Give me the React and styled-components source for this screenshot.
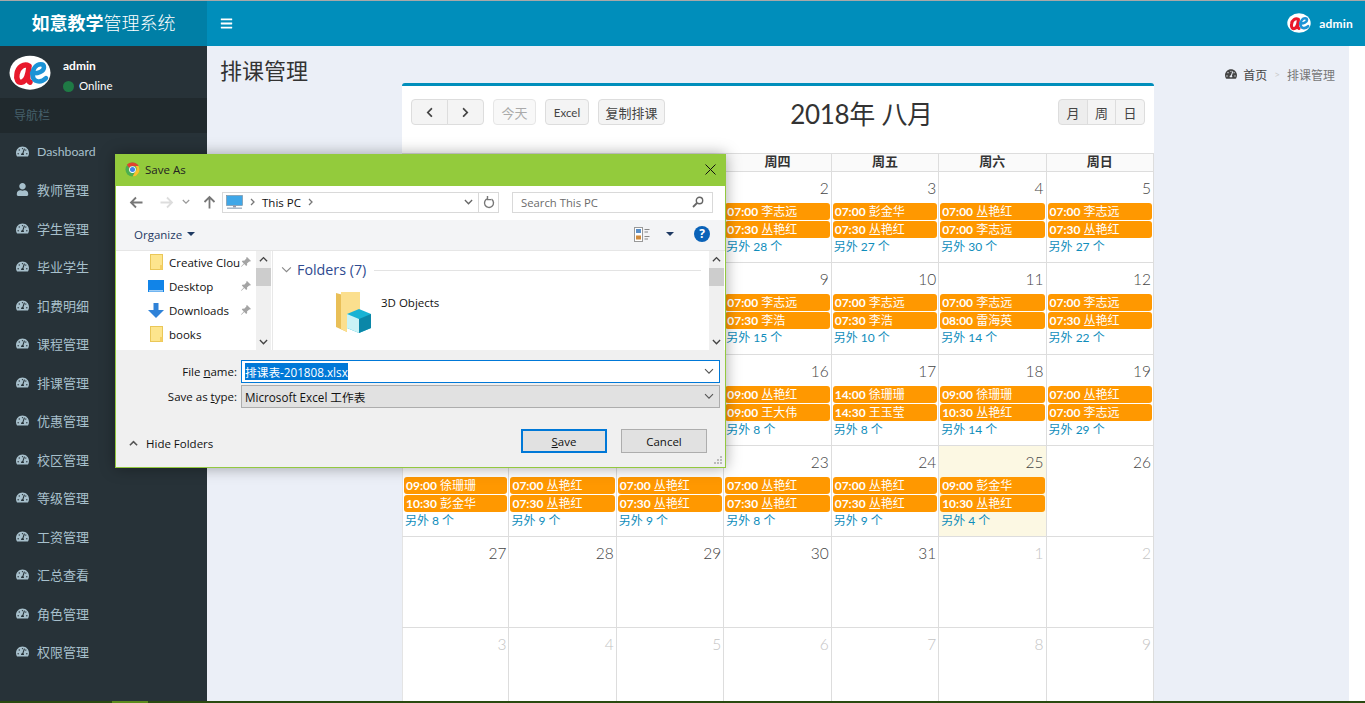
import React from 'react';
import styled, { createGlobalStyle } from 'styled-components';
import { FaBars, FaTachometerAlt, FaUser, FaChevronLeft, FaChevronRight } from 'react-icons/fa';

const CJK = '"Noto Sans CJK SC", sans-serif';
const UI = `Lato, ${CJK}`;
const WIN = `"Open Sans", ${CJK}`;

const Global = createGlobalStyle`
  html, body { margin: 0; padding: 0; background: #fff; overflow: hidden; }
  * { box-sizing: border-box; }
`;

const Page = styled.div`
  position: relative;
  width: 1365px;
  height: 703px;
  display: flex;
  flex-direction: column;
  overflow: hidden;
  font-family: ${UI};
  border-top: 1px solid #a8a8a8;
`;

const TopBar = styled.header`
  flex: 0 0 45px;
  display: flex;
  align-items: center;
  background: #008ebb;
  color: #fff;
`;

const Brand = styled.div`
  width: 207px;
  height: 100%;
  background: #007fa6;
  font-size: 18px;
  line-height: 44px;
  text-align: center;
  font-weight: 300;
  b { font-weight: 700; }
`;

const Burger = styled.div`
  margin-left: 13px;
  display: flex;
  font-size: 13px;
`;

const TopUser = styled.div`
  margin-left: auto;
  margin-right: 12px;
  display: flex;
  align-items: center;
  gap: 8px;
  font-size: 12px;
  font-weight: 700;
  letter-spacing: 0.2px;
`;

const Body = styled.div`
  flex: 1;
  display: flex;
  min-height: 0;
`;

const Sidebar = styled.aside`
  width: 207px;
  background: #273238;
  color: #a7c0cc;
`;

const UserPanel = styled.div`
  height: 52px;
  padding: 9px 0 0 9px;
  display: flex;
  gap: 12px;
  color: #fff;
`;

const UserName = styled.div`
  font-size: 12px;
  font-weight: 700;
  line-height: 16px;
  margin-top: 3px;
`;

const UserStatus = styled.div`
  display: flex;
  align-items: center;
  gap: 5px;
  font-size: 11.5px;
  line-height: 16px;
  margin-top: 4px;
  font-weight: 400;
`;

const StatusDot = styled.i`
  width: 11px;
  height: 11px;
  border-radius: 50%;
  background: #1f7a45;
`;

const NavHeader = styled.div`
  height: 35px;
  padding-left: 14px;
  background: #20292d;
  color: #46606b;
  font-size: 12px;
  line-height: 35px;
`;

const NavItem = styled.div`
  height: 38.5px;
  padding: 0 0 ${p => (p.$latin ? '1px' : '2px')} 16px;
  display: flex;
  align-items: center;
  gap: 8px;
  font-size: ${p => (p.$latin ? '12.3px' : '13px')};
`;

const NavIcon = styled.span`
  width: 13px;
  display: flex;
  justify-content: center;
  font-size: 13px;
`;

const Content = styled.main`
  flex: 1;
  background: #ebeff7;
  min-width: 0;
  overflow: hidden;
`;

const Gutter = styled.div`
  width: 16px;
  background: #fff;
`;

const ContentHeader = styled.div`
  height: 37px;
  padding: 0 14px 0 13px;
  display: flex;
  justify-content: space-between;
`;

const PageTitle = styled.h1`
  margin: 10px 0 0;
  height: 30px;
  font-size: 22px;
  line-height: 30px;
  font-weight: 400;
  color: #333;
`;

const Crumbs = styled.div`
  margin-top: 19px;
  display: flex;
  align-items: center;
  height: 18px;
  gap: 6px;
  font-size: 12px;
  color: #444;
`;

const CrumbSep = styled.span`
  color: #ccc;
  font-size: 10px;
  margin: 0 1px;
`;

const CrumbActive = styled.span`
  color: #777;
`;

const Card = styled.section`
  width: 752px;
  margin: 0 auto;
  background: #fff;
  border-top: 3px solid #008ebb;
  border-radius: 3px 3px 0 0;
`;

const Toolbar = styled.div`
  height: 67px;
  padding: 13px 9px 0;
  display: flex;
  justify-content: space-between;
  align-items: flex-start;
`;

const ToolLeft = styled.div`
  display: flex;
  gap: 9px;
`;

const Group = styled.div`
  display: flex;
`;

const CalButton = styled.button`
  height: 26px;
  min-width: ${p => p.$w || 0}px;
  padding: 0 6px;
  display: flex;
  align-items: center;
  justify-content: center;
  font-family: ${UI};
  font-size: ${p => (p.$latin ? '11.5px' : '13px')};
  color: ${p => (p.$disabled ? '#aaa' : '#444')};
  background: ${p => (p.$active ? '#ededed' : p.$disabled ? '#f8f8f8' : '#f4f4f4')};
  border: 1px solid ${p => (p.$disabled ? '#e6e6e6' : '#ddd')};
  border-radius: 4px;
  ${Group} &:not(:last-child) { border-top-right-radius: 0; border-bottom-right-radius: 0; }
  ${Group} &:not(:first-child) { margin-left: -1px; border-top-left-radius: 0; border-bottom-left-radius: 0; }
`;

const CalTitle = styled.h2`
  margin: -1px 0 0;
  font-size: 26px;
  line-height: 32px;
  font-weight: 400;
  letter-spacing: -0.3px;
  color: #333;
  white-space: nowrap;
`;

const WeekRow = styled.div`
  display: grid;
  grid-template-columns: repeat(7, 1fr);
  height: 19px;
  background: #fafafa;
  border-top: 1px solid #ddd;
  border-bottom: 1px solid #ddd;
`;

const WeekCell = styled.div`
  font-size: 13px;
  font-weight: 700;
  line-height: 15px;
  text-align: center;
  color: #333;
  border-right: 1px solid #ddd;
`;

const DayRow = styled.div`
  display: grid;
  grid-template-columns: repeat(7, 1fr);
  height: 91.3px;
  border-bottom: 1px solid #ddd;
`;

const DayCell = styled.div`
  padding: 0 1px;
  border-right: 1px solid #ddd;
  background: ${p => (p.$today ? '#fcf8e3' : '#fff')};
  &:first-child { border-left: 1px solid #e4e4e4; }
`;

const DayNumber = styled.div`
  height: 31px;
  padding: 5px 1px 0 0;
  text-align: right;
  font-size: 15.5px;
  line-height: 22px;
  font-weight: 300;
  color: ${p => (p.$other ? '#c4c4c4' : '#444')};
`;

const EventChip = styled.div`
  height: 17px;
  margin-bottom: 1px;
  padding-left: 2px;
  background: #ff9800;
  border-radius: 3px;
  color: #fff;
  font-size: 12px;
  line-height: 17px;
  white-space: nowrap;
  overflow: hidden;
  b { font-weight: 700; }
`;

const MoreLink = styled.div`
  padding-left: 1px;
  font-size: 12px;
  line-height: 15px;
  color: #0f8dbb;
`;

const BottomStrip = styled.div`
  flex: 0 0 2px;
  display: flex;
  background: #2a4a10;
`;

const StripSegment = styled.div`
  width: 36px;
  margin-left: 112px;
  background: #5c8a1c;
`;

/* save dialog, a window on top of the page */
const Dialog = styled.div`
  position: absolute;
  left: 115px;
  top: 153px;
  width: 611px;
  height: 314px;
  display: flex;
  flex-direction: column;
  background: #f0f0f0;
  border: 1px solid #93c83f;
  border-top: 0;
  box-shadow: 0 0 14px rgba(0, 0, 0, 0.35);
  font-family: ${WIN};
  font-size: 11.5px;
  color: #111;
`;

const TitleBar = styled.div`
  flex: 0 0 32px;
  display: flex;
  align-items: center;
  gap: 5px;
  padding: 0 9px 2px 9px;
  background: #93cb3c;
  font-size: 11.5px;
  color: #222;
`;

const CloseX = styled.span`
  margin-left: auto;
  display: flex;
`;

const AddressRow = styled.div`
  flex: 0 0 34px;
  display: flex;
  align-items: center;
  background: #fff;
  padding: 0 0 2px 13px;
`;

const NavArrow = styled.span`
  display: flex;
  width: ${p => p.$w}px;
`;

const AddressBox = styled.div`
  width: 277px;
  height: 21px;
  display: flex;
  align-items: center;
  margin-left: 5px;
  padding-left: 3px;
  border: 1px solid #d9d9d9;
  gap: 7px;
  font-size: 11.5px;
`;

const AddressEnd = styled.span`
  margin-left: auto;
  display: flex;
  height: 100%;
  align-items: center;
`;

const RefreshBox = styled.span`
  width: 20px;
  height: 100%;
  margin-left: 5px;
  display: flex;
  align-items: center;
  justify-content: center;
  border-left: 1px solid #d9d9d9;
`;

const SearchBox = styled.div`
  width: 201px;
  height: 21px;
  margin-left: 13px;
  padding: 0 8px;
  display: flex;
  align-items: center;
  justify-content: space-between;
  border: 1px solid #d9d9d9;
  color: #6b6b6b;
  font-size: 11.3px;
`;

const OrganizeRow = styled.div`
  flex: 0 0 31px;
  display: flex;
  align-items: center;
  padding: 0 15px 2px 18px;
  background: #f3f4f6;
  border-bottom: 1px solid #e6e6e6;
  color: #1f3a63;
`;

const Caret = styled.i`
  width: 0;
  height: 0;
  margin-left: 5px;
  border: 4px solid transparent;
  border-top: 4px solid #1f3a63;
  border-bottom: 0;
`;

const ViewButtons = styled.div`
  margin-left: auto;
  display: flex;
  align-items: center;
  gap: 10px;
`;

const HelpIcon = styled.span`
  width: 16px;
  height: 16px;
  margin-left: 20px;
  border-radius: 50%;
  background: #0a62b8;
  color: #fff;
  font-size: 12px;
  font-weight: 700;
  line-height: 16px;
  text-align: center;
`;

const Panes = styled.div`
  flex: 0 0 99px;
  display: flex;
  padding-right: 1px;
  background: #fff;
  overflow: hidden;
`;

const TreePane = styled.div`
  width: 140px;
  padding: 0 0 0 30px;
`;

const TreeRow = styled.div`
  height: 24px;
  padding-bottom: 2px;
  display: flex;
  align-items: center;
  gap: 5px;
  position: relative;
  white-space: nowrap;
`;

const TreeIcon = styled.span`
  width: 16px;
  display: flex;
  justify-content: center;
  margin-left: 2px;
`;

const TreeLabel = styled.span`
  width: 72px;
  overflow: hidden;
`;

const Pin = styled.span`
  position: absolute;
  right: 5px;
  top: 6px;
  display: flex;
`;

const Scrollbar = styled.div`
  width: 15px;
  display: flex;
  flex-direction: column;
  align-items: center;
  justify-content: space-between;
  background: #f0f0f0;
  position: relative;
  padding: 5px 0;
`;

const ScrollThumb = styled.div`
  position: absolute;
  left: 0;
  right: 0;
  top: 17px;
  height: 18px;
  background: #cdcdcd;
`;

const PaneGap = styled.div`
  width: 1px;
  margin-left: 1px;
  background: #e8e8e8;
`;

const FilesPane = styled.div`
  flex: 1;
  padding: 9px 8px 0 8px;
`;

const GroupHeader = styled.div`
  display: flex;
  align-items: center;
  gap: 5px;
  color: #2f4a8f;
  font-size: 14.3px;
  line-height: 20px;
`;

const HeaderLine = styled.i`
  flex: 1;
  height: 1px;
  margin-left: 3px;
  background: #e3e3e3;
`;

const FileTile = styled.div`
  display: flex;
  align-items: flex-start;
  gap: 9px;
  margin: 11px 0 0 53px;
  line-height: 24px;
`;

const FormArea = styled.div`
  flex: 1;
  display: flex;
  flex-direction: column;
  padding: 10px 5px 0 0;
  position: relative;
`;

const FormRow = styled.div`
  display: flex;
  align-items: center;
  margin-bottom: 2px;
`;

const FormLabel = styled.label`
  width: 125px;
  padding-right: 4px;
  text-align: right;
  u { text-decoration: underline; }
`;

const FormField = styled.div`
  flex: 1;
  height: 23px;
  padding: 0 5px 0 3px;
  display: flex;
  align-items: center;
  justify-content: space-between;
  background: ${p => (p.$select ? '#e1e1e1' : '#fff')};
  border: 1px solid ${p => (p.$select ? '#adadad' : '#0078d7')};
  font-size: 11.7px;
`;

const Selected = styled.span`
  background: #0078d7;
  color: #fff;
`;

const FormFooter = styled.div`
  display: flex;
  align-items: center;
  margin: 19px 13px 0 13px;
`;

const HideFolders = styled.div`
  display: flex;
  align-items: center;
  gap: 8px;
  padding-top: 4px;
  white-space: nowrap;
`;

const DialogButton = styled.button`
  width: 86px;
  height: 24px;
  margin-left: ${p => (p.$primary ? 'auto' : '14px')};
  padding: 0;
  font-family: ${WIN};
  font-size: 11.5px;
  color: #111;
  background: #e1e1e1;
  border: ${p => (p.$primary ? '2px solid #0078d7' : '1px solid #adadad')};
  u { text-decoration: underline; }
`;

const Grip = styled.span`
  position: absolute;
  right: 2px;
  bottom: 2px;
  display: flex;
`;

const Logo = ({ size = 42 }) => (
  <svg width={size} height={size * 0.84} viewBox="0 0 42 35" style={{ flexShrink: 0 }}>
    <ellipse cx="21" cy="17.5" rx="20.5" ry="17" fill="#fff" />
    <path d="M20 11c-5-3-11 1-12 8-1 5 1 9 5 8 4-1 6-7 7-15-1 6-2 14 1 15" fill="none" stroke="#e8192c" strokeWidth="5.5" strokeLinecap="round" />
    <path d="M23 18c6 1 12-2 12-6 0-4-6-4-9 0-4 5-3 13 2 14 4 1 7-1 9-3" fill="none" stroke="#1c93d6" strokeWidth="4.5" strokeLinecap="round" />
  </svg>
);

const ChromeIcon = () => (
  <svg width="15" height="15" viewBox="0 0 16 16">
    <circle cx="8" cy="8" r="7.5" fill="#4caf50" />
    <path d="M8 .5a7.5 7.5 0 0 1 6.5 3.75H8a3.75 3.75 0 0 0-3.4 2.2L2 2.8A7.5 7.5 0 0 1 8 .5z" fill="#e2432f" />
    <path d="M14.5 4.25A7.5 7.5 0 0 1 8 15.5l3.2-5.6a3.75 3.75 0 0 0-.1-5.65z" fill="#fbc02d" />
    <circle cx="8" cy="8" r="3.6" fill="#fff" />
    <circle cx="8" cy="8" r="2.7" fill="#3f83e8" />
  </svg>
);

const Arrow = ({ dir, color }) => (
  <svg width="15" height="13" viewBox="0 0 15 13" style={{ transform: dir === 'right' ? 'scaleX(-1)' : dir === 'up' ? 'rotate(90deg)' : 'none' }}>
    <path d="M13.5 6.5H2M7 1.5l-5 5 5 5" fill="none" stroke={color} strokeWidth="1.8" />
  </svg>
);

const Chevron = ({ up, color = '#555', size = 9, width = 1.5 }) => (
  <svg width={size} height={size * 0.7} viewBox="0 0 10 7" style={{ transform: up ? 'rotate(180deg)' : 'none' }}>
    <path d="M1 1.2l4 4 4-4" fill="none" stroke={color} strokeWidth={width} />
  </svg>
);

const SmallRight = () => (
  <svg width="5" height="8" viewBox="0 0 5 8"><path d="M1 1l3 3-3 3" fill="none" stroke="#777" strokeWidth="1.3" /></svg>
);

const Monitor = () => (
  <svg width="17" height="15" viewBox="0 0 17 15">
    <rect x="0.5" y="0.5" width="16" height="10" fill="#3fa7e8" stroke="#7a8a99" strokeWidth="0.6" />
    <rect x="7" y="10.5" width="3" height="2" fill="#99a" />
    <rect x="1" y="12.5" width="15" height="1.4" fill="#9fb2c4" />
  </svg>
);

const FolderSmall = () => (
  <svg width="13" height="16" viewBox="0 0 13 16">
    <rect x="0.5" y="0.5" width="12" height="15" fill="#fde58d" stroke="#eac758" />
    <rect x="10" y="11" width="2.5" height="4.5" fill="#f5cf63" />
  </svg>
);

const DesktopIcon = () => (
  <svg width="16" height="12" viewBox="0 0 16 12">
    <rect width="16" height="12" fill="#1184e8" />
    <rect x="1" y="10.4" width="14" height="1" fill="#fff" />
  </svg>
);

const DownloadIcon = () => (
  <svg width="16" height="15" viewBox="0 0 16 15">
    <path d="M5.5 0h5v7H16l-8 8-8-8h5.5z" fill="#2f82d8" />
  </svg>
);

const PinIcon = () => (
  <svg width="10" height="10" viewBox="0 0 10 10">
    <path d="M6 0l4 4-1 .6-.8-.2L6 6.600l.2 1.400-1 1-2-2L.6 9.800 0 9.400 2.800 6.600l-2-2 1-1 1.400.2L5.400 1.600 5.200.8z" fill="#a4a4a4" />
  </svg>
);

const ObjectsIcon = () => (
  <svg width="38" height="43" viewBox="0 0 38 43">
    <path d="M2 2l11 3v36L2 36z" fill="#e9bf57" />
    <path d="M7 1h19v24H13v16l-6-3z" fill="#fbdf8e" />
    <path d="M25 18l12 5v14l-12 5-12-5V23z" fill="#18b3d4" />
    <path d="M13 23l12 5v14l-12-5z" fill="#c9f3f6" />
    <path d="M25 28l12-5v14l-12 5z" fill="#0b87a8" />
  </svg>
);

const ViewIcon = () => (
  <svg width="17" height="15" viewBox="0 0 17 15">
    <rect x="0.5" y="0.500" width="8" height="14" fill="#fff" stroke="#999" />
    <rect x="2" y="2" width="5" height="4" fill="#5b8fc7" />
    <rect x="2" y="8.500" width="5" height="4" fill="#d08a3c" />
    <path d="M10.500 2.500h5M10.500 5h3.500M10.500 9.500h5M10.500 12h3.500" stroke="#888" />
  </svg>
);

const SearchGlass = () => (
  <svg width="12" height="12" viewBox="0 0 12 12">
    <circle cx="7.500" cy="4.500" r="3.200" fill="none" stroke="#666" strokeWidth="1.400" />
    <path d="M5 7L1 11" stroke="#666" strokeWidth="1.800" />
  </svg>
);

const RefreshIcon = () => (
  <svg width="12" height="13" viewBox="0 0 12 13">
    <path d="M8.500 3.200a4.500 4.500 0 1 1-3.700-.6M4.500 0v3.600h3.500" fill="none" stroke="#777" strokeWidth="1.400" />
  </svg>
);

const GripIcon = () => (
  <svg width="9" height="9" viewBox="0 0 9 9" fill="#bbb">
    <rect x="6" y="0" width="2" height="2" />
    <rect x="3" y="3" width="2" height="2" />
    <rect x="6" y="3" width="2" height="2" />
    <rect x="0" y="6" width="2" height="2" />
    <rect x="3" y="6" width="2" height="2" />
    <rect x="6" y="6" width="2" height="2" />
  </svg>
);

const navItems = ['Dashboard', '教师管理', '学生管理', '毕业学生', '扣费明细', '课程管理', '排课管理', '优惠管理', '校区管理', '等级管理', '工资管理', '汇总查看', '角色管理', '权限管理'];
const weekDays = ['周一', '周二', '周三', '周四', '周五', '周六', '周日'];

const ev = (a, b, more) => ({ a, b, more });
const cyh = '丛艳红';
// the first three days of the top rows sit behind the dialog, so they carry no events
const weeks = [
  [
    { n: 30, other: true }, { n: 31, other: true }, { n: 1 },
    { n: 2, e: ev('07:00 李志远', `07:30 ${cyh}`, 28) },
    { n: 3, e: ev('07:00 彭金华', `07:30 ${cyh}`, 27) },
    { n: 4, e: ev(`07:00 ${cyh}`, '07:00 李志远', 30) },
    { n: 5, e: ev('07:00 李志远', `07:30 ${cyh}`, 27) },
  ],
  [
    { n: 6 }, { n: 7 }, { n: 8 },
    { n: 9, e: ev('07:00 李志远', '07:30 李浩', 15) },
    { n: 10, e: ev('07:00 李志远', '07:30 李浩', 10) },
    { n: 11, e: ev('07:00 李志远', '08:00 雷海英', 14) },
    { n: 12, e: ev('07:00 李志远', `07:30 ${cyh}`, 22) },
  ],
  [
    { n: 13 }, { n: 14 }, { n: 15 },
    { n: 16, e: ev(`09:00 ${cyh}`, '09:00 王大伟', 8) },
    { n: 17, e: ev('14:00 徐珊珊', '14:30 王玉莹', 8) },
    { n: 18, e: ev('09:00 徐珊珊', `10:30 ${cyh}`, 14) },
    { n: 19, e: ev(`07:00 ${cyh}`, '07:00 李志远', 29) },
  ],
  [
    { n: 20, e: ev('09:00 徐珊珊', '10:30 彭金华', 8) },
    { n: 21, e: ev(`07:00 ${cyh}`, `07:30 ${cyh}`, 9) },
    { n: 22, e: ev(`07:00 ${cyh}`, `07:30 ${cyh}`, 9) },
    { n: 23, e: ev(`07:00 ${cyh}`, `07:30 ${cyh}`, 8) },
    { n: 24, e: ev(`07:00 ${cyh}`, `07:30 ${cyh}`, 9) },
    { n: 25, today: true, e: ev('09:00 彭金华', `10:30 ${cyh}`, 4) },
    { n: 26 },
  ],
  [
    { n: 27 }, { n: 28 }, { n: 29 }, { n: 30 }, { n: 31 }, { n: 1, other: true }, { n: 2, other: true },
  ],
  [3, 4, 5, 6, 7, 8, 9].map(n => ({ n, other: true })),
];

const Chip = ({ text }) => {
  const [time, ...rest] = text.split(' ');
  return <EventChip><b>{time}</b> {rest.join(' ')}</EventChip>;
};

const SaveDialog = () => (
  <Dialog>
    <TitleBar>
      <ChromeIcon />
      <span>Save As</span>
      <CloseX>
        <svg width="11" height="11" viewBox="0 0 11 11"><path d="M.5.5l10 10M10.500.5l-10 10" stroke="#111" /></svg>
      </CloseX>
    </TitleBar>
    <AddressRow>
      <NavArrow $w={30}><Arrow color="#777" /></NavArrow>
      <NavArrow $w={23}><Arrow dir="right" color="#ddd" /></NavArrow>
      <NavArrow $w={20}><Chevron color="#999" size={8} /></NavArrow>
      <NavArrow $w={15}><Arrow dir="up" color="#777" /></NavArrow>
      <AddressBox>
        <Monitor />
        <SmallRight />
        <span>This PC</span>
        <SmallRight />
        <AddressEnd>
          <Chevron color="#666" />
          <RefreshBox><RefreshIcon /></RefreshBox>
        </AddressEnd>
      </AddressBox>
      <SearchBox>
        <span>Search This PC</span>
        <SearchGlass />
      </SearchBox>
    </AddressRow>
    <OrganizeRow>
      <span>Organize</span>
      <Caret />
      <ViewButtons>
        <ViewIcon />
        <Caret />
      </ViewButtons>
      <HelpIcon>?</HelpIcon>
    </OrganizeRow>
    <Panes>
      <TreePane>
        <TreeRow>
          <TreeIcon><FolderSmall /></TreeIcon>
          <TreeLabel>Creative Clou</TreeLabel>
          <Pin><PinIcon /></Pin>
        </TreeRow>
        <TreeRow>
          <TreeIcon><DesktopIcon /></TreeIcon>
          <TreeLabel>Desktop</TreeLabel>
          <Pin><PinIcon /></Pin>
        </TreeRow>
        <TreeRow>
          <TreeIcon><DownloadIcon /></TreeIcon>
          <TreeLabel>Downloads</TreeLabel>
          <Pin><PinIcon /></Pin>
        </TreeRow>
        <TreeRow>
          <TreeIcon><FolderSmall /></TreeIcon>
          <TreeLabel>books</TreeLabel>
        </TreeRow>
      </TreePane>
      <Scrollbar>
        <ScrollThumb />
        <Chevron up color="#444" />
        <Chevron color="#444" />
      </Scrollbar>
      <PaneGap />
      <FilesPane>
        <GroupHeader>
          <Chevron color="#888" size={11} width={1} />
          <span>Folders (7)</span>
          <HeaderLine />
        </GroupHeader>
        <FileTile>
          <ObjectsIcon />
          <span>3D Objects</span>
        </FileTile>
      </FilesPane>
      <Scrollbar>
        <ScrollThumb />
        <Chevron up color="#444" />
        <Chevron color="#444" />
      </Scrollbar>
    </Panes>
    <FormArea>
      <FormRow>
        <FormLabel>File <u>n</u>ame:</FormLabel>
        <FormField>
          <Selected>排课表-201808.xlsx</Selected>
          <Chevron color="#555" size={10} width={1.100} />
        </FormField>
      </FormRow>
      <FormRow>
        <FormLabel>Save as <u>t</u>ype:</FormLabel>
        <FormField $select>
          <span>Microsoft Excel 工作表</span>
          <Chevron color="#555" size={10} width={1.100} />
        </FormField>
      </FormRow>
      <FormFooter>
        <HideFolders>
          <Chevron up color="#555" size={9} width={1.800} />
          <span>Hide Folders</span>
        </HideFolders>
        <DialogButton $primary><u>S</u>ave</DialogButton>
        <DialogButton>Cancel</DialogButton>
      </FormFooter>
      <Grip><GripIcon /></Grip>
    </FormArea>
  </Dialog>
);

export default function App() {
  return (
    <Page>
      <Global />
      <TopBar>
        <Brand><b>如意教学</b>管理系统</Brand>
        <Burger><FaBars /></Burger>
        <TopUser>
          <Logo size={24} />
          <span>admin</span>
        </TopUser>
      </TopBar>
      <Body>
        <Sidebar>
          <UserPanel>
            <Logo size={42} />
            <div>
              <UserName>admin</UserName>
              <UserStatus><StatusDot />Online</UserStatus>
            </div>
          </UserPanel>
          <NavHeader>导航栏</NavHeader>
          {navItems.map(item => (
            <NavItem key={item} $latin={item === 'Dashboard'}>
              <NavIcon>{item === '教师管理' ? <FaUser /> : <FaTachometerAlt />}</NavIcon>
              {item}
            </NavItem>
          ))}
        </Sidebar>
        <Content>
          <ContentHeader>
            <PageTitle>排课管理</PageTitle>
            <Crumbs>
              <FaTachometerAlt />
              <span>首页</span>
              <CrumbSep>&gt;</CrumbSep>
              <CrumbActive>排课管理</CrumbActive>
            </Crumbs>
          </ContentHeader>
          <Card>
            <Toolbar>
              <ToolLeft>
                <Group>
                  <CalButton $w={37}><FaChevronLeft size={11} /></CalButton>
                  <CalButton $w={37}><FaChevronRight size={11} /></CalButton>
                </Group>
                <CalButton $disabled $w={43}>今天</CalButton>
                <CalButton $latin $w={44}>Excel</CalButton>
                <CalButton $w={67}>复制排课</CalButton>
              </ToolLeft>
              <CalTitle>2018年 八月</CalTitle>
              <Group>
                <CalButton $active $w={30}>月</CalButton>
                <CalButton $w={29}>周</CalButton>
                <CalButton $w={30}>日</CalButton>
              </Group>
            </Toolbar>
            <WeekRow>
              {weekDays.map(d => <WeekCell key={d}>{d}</WeekCell>)}
            </WeekRow>
            {weeks.map((week, i) => (
              <DayRow key={i}>
                {week.map(day => (
                  <DayCell key={day.n} $today={day.today}>
                    <DayNumber $other={day.other}>{day.n}</DayNumber>
                    {day.e && (
                      <>
                        <Chip text={day.e.a} />
                        <Chip text={day.e.b} />
                        <MoreLink>另外 {day.e.more} 个</MoreLink>
                      </>
                    )}
                  </DayCell>
                ))}
              </DayRow>
            ))}
          </Card>
        </Content>
        <Gutter />
      </Body>
      <BottomStrip><StripSegment /></BottomStrip>
      <SaveDialog />
    </Page>
  );
}
